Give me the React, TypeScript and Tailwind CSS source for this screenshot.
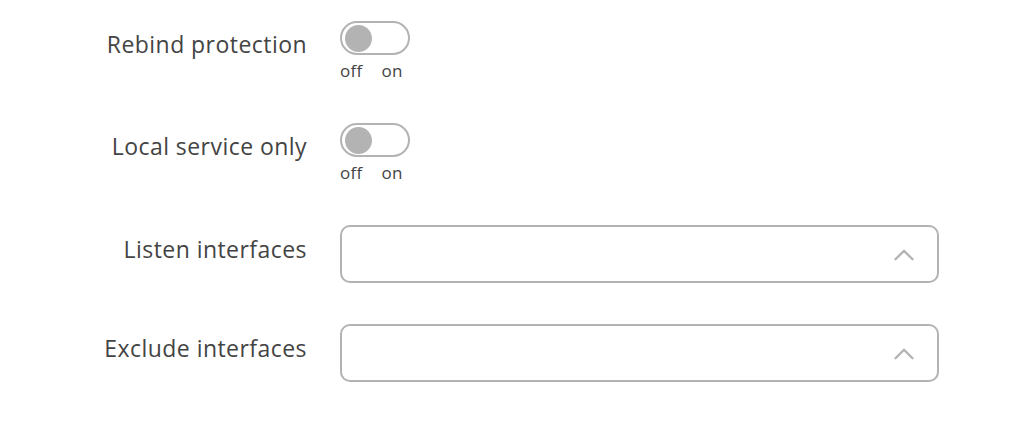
import { ChevronUp } from "lucide-react";

type ToggleRowProps = {
  label: string;
};

function ToggleRow({ label }: ToggleRowProps) {
  return (
    <div className="flex items-start gap-[33px]">
      <div className="w-[307px] text-right text-[23px] tracking-[0.45px] leading-[30px] text-[#444] pt-[8px]">
        {label}
      </div>
      <div className="flex flex-col">
        <div className="w-[70px] h-[34px] rounded-full border-2 border-[#b3b3b3] bg-white flex items-center px-[3px]">
          <div className="w-[27px] h-[27px] rounded-full bg-[#b3b3b3]" />
        </div>
        <div className="flex gap-[19px] text-[17px] tracking-[0.3px] leading-[22px] text-[#444] mt-[5px]">
          <span>off</span>
          <span>on</span>
        </div>
      </div>
    </div>
  );
}

function SelectRow({ label }: { label: string }) {
  return (
    <div className="flex items-start gap-[33px]">
      <div className="w-[307px] text-right text-[23px] tracking-[0.45px] leading-[30px] text-[#444] pt-[9px]">
        {label}
      </div>
      <div className="w-[599px] h-[58px] rounded-[10px] border-2 border-[#b3b3b3] bg-white flex items-center justify-end pr-[16px]">
        <ChevronUp size={34} strokeWidth={1.7} className="text-[#b3b3b3] mt-[2px]" />
      </div>
    </div>
  );
}

export default function App() {
  return (
    <div
      className="w-[1022px] h-[424px] bg-white pt-[21px]"
      style={{ fontFamily: '"Open Sans", "Noto Sans", sans-serif' }}
    >
      <div className="flex flex-col gap-[41px]">
        <ToggleRow label="Rebind protection" />
        <ToggleRow label="Local service only" />
        <SelectRow label="Listen interfaces" />
        <SelectRow label="Exclude interfaces" />
      </div>
    </div>
  );
}
